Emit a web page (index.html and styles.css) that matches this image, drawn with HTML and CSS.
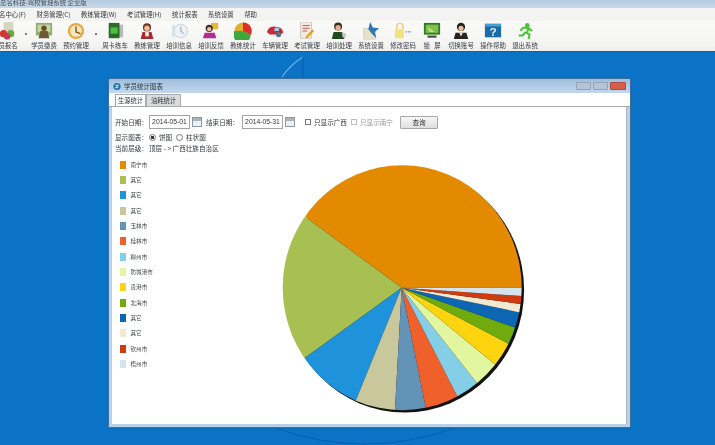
FILE: index.html
```html
<!DOCTYPE html>
<html lang="zh-CN">
<head>
<meta charset="utf-8">
<title>学员统计图表</title>
<link rel="stylesheet" href="styles.css">
</head>
<body>
<div class="app">
  <header class="titlebar"><span>总名科技-驾校管理系统 企业版</span></header>
  <nav class="menubar">
    <span class="m1">名中心(F)</span><span>财务管理(C)</span><span>教练管理(W)</span><span>考试管理(H)</span><span>统计报表</span><span>系统设置</span><span>帮助</span>
  </nav>
  <div class="toolbar">
    <div class="tool"><svg viewBox="0 0 20 20"><rect x="5" y="0" width="11" height="13" fill="#d8d4c4"/><circle cx="5" cy="13" r="4" fill="#d9342c"/><circle cx="13" cy="13" r="4" fill="#6aa83c"/><circle cx="9" cy="16" r="3.5" fill="#c23a58"/></svg><span>员报名</span></div>
    <i class="dot dot-a"></i>
    <div class="tool"><svg viewBox="0 0 20 20"><rect x="1" y="1" width="18" height="14" fill="#8fb070"/><rect x="3" y="3" width="14" height="8" fill="#c6d6a0"/><circle cx="10" cy="7" r="3" fill="#6b4a22"/><path d="M4 18 L6 10 H14 L16 18Z" fill="#6e5a30"/></svg><span>学员缴费</span></div>
    <div class="tool"><svg viewBox="0 0 20 20"><circle cx="10" cy="10" r="9" fill="#e8a93c"/><circle cx="10" cy="10" r="6.5" fill="#f6e6c4"/><path d="M10 5V11L15 13" stroke="#8a5a20" stroke-width="1.6" fill="none"/></svg><span>预约管理</span></div>
    <i class="dot dot-b"></i>
    <div class="tool"><svg viewBox="0 0 20 20"><rect x="11" y="3" width="8" height="14" fill="#b8bcb4"/><rect x="3" y="1" width="12" height="17" fill="#2c6a2c"/><rect x="5" y="6" width="8" height="7" fill="#48c040"/></svg><span>周卡练车</span></div>
    <div class="tool"><svg viewBox="0 0 20 20"><circle cx="10" cy="6" r="4.5" fill="#6e3420"/><circle cx="10" cy="7" r="3" fill="#eebc9c"/><path d="M3 19 L5 11 H15 L17 19Z" fill="#a8282c"/><rect x="8" y="11" width="4" height="5" fill="#f0e8e0"/></svg><span>教练管理</span></div>
    <div class="tool"><svg viewBox="0 0 20 20"><rect x="2" y="3" width="4" height="14" fill="#dfe6ea"/><circle cx="12" cy="10" r="7.5" fill="#eef2f4" stroke="#c4d0d8"/><path d="M12 5V10L15 13" stroke="#a8b8c4" stroke-width="1.4" fill="none"/></svg><span>培训信息</span></div>
    <div class="tool"><svg viewBox="0 0 20 20"><rect x="10" y="1" width="8" height="7" fill="#e8b830"/><circle cx="8" cy="7" r="4" fill="#3a2c30"/><circle cx="8" cy="8" r="2.4" fill="#ecc0a4"/><path d="M1 18 L3 12 H14 L16 18Z" fill="#b02c90"/></svg><span>培训反馈</span></div>
    <div class="tool"><svg viewBox="-10 -10 20 20"><circle r="9.5" fill="#dfae2c"/><path d="M0 0 L0 -9.5 A9.5 9.5 0 0 1 8.5 4.5Z" fill="#e02c2c"/><path d="M0 0 L8.5 4.5 A9.5 9.5 0 1 1 -9.5 0Z" fill="#3ea83a"/></svg><span>教练统计</span></div>
    <div class="tool"><svg viewBox="0 0 20 20"><path d="M1 11 Q3 5 9 5 L15 6 Q19 8 19 12 L16 14 H4Z" fill="#c8283c"/><path d="M10 6 L15 7 L14 10 H9Z" fill="#9cd0e8"/><circle cx="14" cy="14" r="3" fill="#5a7488"/></svg><span>车辆管理</span></div>
    <div class="tool"><svg viewBox="0 0 20 20"><rect x="3" y="0" width="12" height="18" fill="#f2ece4" stroke="#b8b0a8" stroke-width=".7"/><path d="M5 4H13M5 7H13M5 10H10" stroke="#c04a3c"/><path d="M8 17 L16 8 L18 10 L10 18Z" fill="#e0a020"/></svg><span>考试管理</span></div>
    <div class="tool"><svg viewBox="0 0 20 20"><circle cx="9" cy="5" r="4.4" fill="#3a2a18"/><circle cx="9" cy="6.4" r="3" fill="#e6b08c"/><path d="M2 19 L4 11 H14 L16 19Z" fill="#20491f"/><path d="M13 11 L18 13 L17 18 L14 17Z" fill="#c4c8c0"/></svg><span>培训处理</span></div>
    <div class="tool"><svg viewBox="0 0 20 20"><rect x="2" y="7" width="13" height="12" fill="#e8e2c8" stroke="#b0c0cc" stroke-width=".6"/><path d="M9 0 L12 6 L19 7 L14 11 L16 18 L11 13 L7 8Z" fill="#2878b8"/></svg><span>系统设置</span></div>
    <div class="tool"><svg viewBox="0 0 20 20"><path d="M3 8V5a3.5 3.5 0 0 1 7 0V8" fill="none" stroke="#ecd070" stroke-width="1.6"/><rect x="1" y="8" width="10" height="10" rx="1" fill="#f4e27c"/><path d="M13 11H19" stroke="#7088b8" stroke-width="1.5" stroke-dasharray="1.5 1"/></svg><span>修改密码</span></div>
    <div class="tool tool-narrow"><svg viewBox="0 0 20 20"><rect x="1" y="1" width="18" height="13" fill="#2f7a26"/><path d="M3 3H17V12H3Z" fill="#7fc048"/><path d="M5 5L13 11H7Z" fill="#bce080"/><rect x="5" y="15" width="10" height="2.5" fill="#50504a"/></svg><span>锁&nbsp;&nbsp;&nbsp;屏</span></div>
    <div class="tool"><svg viewBox="0 0 20 20"><circle cx="10" cy="5.5" r="4.6" fill="#2a2018"/><circle cx="10" cy="7" r="2.9" fill="#e8c0a0"/><path d="M2 19 L4 12 H16 L18 19Z" fill="#2a241e"/><path d="M8 12 L10 16 L12 12Z" fill="#f0e8e0"/></svg><span>切换账号</span></div>
    <div class="tool"><svg viewBox="0 0 20 20"><rect x="1" y="2" width="18" height="15" fill="#1d6ba6"/><rect x="1" y="2" width="18" height="3" fill="#45a0d0"/><text x="10" y="15" class="help-mark">?</text></svg><span>操作帮助</span></div>
    <div class="tool"><svg viewBox="0 0 20 20"><circle cx="12.5" cy="3.5" r="2.5" fill="#4cc038"/><path d="M8 6 L14 7 L12 12 L15 14 L14 19 M11 11 L7 15 L3 15 M8 6 L5 10 M14 7 L18 10" stroke="#4cc038" stroke-width="2.3" fill="none"/></svg><span>退出系统</span></div>
  </div>
  <main class="desktop">
    <svg class="wallpaper" viewBox="0 0 715 393"><path class="arc-light" d="M282 25 Q290 13 303 5"/><path class="arc-dark" d="M303 5V26"/><path class="arc-dark" d="M275 376 Q365 408 455 376"/></svg>
    <section class="window">
      <div class="win-title">
        <svg class="win-logo" viewBox="0 0 10 10"><circle cx="5" cy="5" r="4.5" fill="#1c6ea8"/><path d="M3 3.5 H7 L3 6.5 H7" stroke="#fff" fill="none"/></svg>
        <span class="win-name">学员统计图表</span>
        <div class="win-controls"><b class="ctl"></b><b class="ctl"></b><b class="ctl ctl-close"></b></div>
      </div>
      <div class="tabs"><span class="tab tab-on">生源统计</span><span class="tab">油耗统计</span></div>
      <div class="panel">
        <div class="form-row row-one">
          <label class="lbl-date">开始日期：</label><span class="input">2014-05-01</span><span class="cal"></span>
          <label class="lbl-date lbl-end">结束日期：</label><span class="input">2014-05-31</span><span class="cal"></span>
          <span class="check check-first"></span><span class="chk-label">只显示广西</span>
          <span class="check check-second"></span><span class="chk-label muted">只显示南宁</span>
          <button class="query">查询</button>
        </div>
        <div class="form-row row-two">
          <label class="lbl-show">显示图表：</label><span class="radio radio-on"></span><span class="opt">饼图</span><span class="radio radio-off"></span><span>柱状图</span>
        </div>
        <div class="form-row row-three"><label class="lbl-show">当前层级：</label><span>顶层 - &gt; 广西壮族自治区</span></div>
        <div class="chart-row">
          <ul class="legend">
            <li><i class="c1"></i>南宁市</li><li><i class="c2"></i>其它</li><li><i class="c3"></i>其它</li><li><i class="c4"></i>其它</li><li><i class="c5"></i>玉林市</li><li><i class="c6"></i>桂林市</li><li><i class="c7"></i>柳州市</li><li><i class="c8"></i>防城港市</li><li><i class="c9"></i>贵港市</li><li><i class="c10"></i>北海市</li><li><i class="c11"></i>其它</li><li><i class="c12"></i>其它</li><li><i class="c13"></i>钦州市</li><li><i class="c14"></i>梧州市</li>
          </ul>
          <svg class="pie" viewBox="275 160 256 258">
            <defs><clipPath id="pie-clip"><ellipse cx="402.2" cy="287.7" rx="119.5" ry="122.5"/></clipPath></defs>
            <ellipse class="pie-shadow" cx="404.6" cy="290" rx="119.5" ry="122.5"/>
            <g clip-path="url(#pie-clip)">
              <polygon class="c1" points="401.7,287.7 557.7,287.7 557.7,120 276.9,120 276.9,196.2"/>
              <polygon class="c2" points="401.7,287.7 276.9,196.2 276.9,378.2"/>
              <polygon class="c3" points="401.7,287.7 276.9,378.2 342.3,433.7"/>
              <polygon class="c4" points="401.7,287.7 342.3,433.7 393,445.8"/>
              <polygon class="c5" points="401.7,287.7 393,445.8 432.9,443.2"/>
              <polygon class="c6" points="401.7,287.7 432.9,443.2 473.2,427.2"/>
              <polygon class="c7" points="401.7,287.7 473.2,427.2 499.2,411.2"/>
              <polygon class="c8" points="401.7,287.7 499.2,411.2 523,387.3"/>
              <polygon class="c9" points="401.7,287.7 523,387.3 539.5,360"/>
              <polygon class="c10" points="401.7,287.7 539.5,360 549.9,339.7"/>
              <polygon class="c11" points="401.7,287.7 549.9,339.7 554.6,319.7"/>
              <polygon class="c12" points="401.7,287.7 554.6,319.7 556.7,308.9"/>
              <polygon class="c13" points="401.7,287.7 556.7,308.9 557.7,298.5"/>
              <polygon class="c14" points="401.7,287.7 557.7,298.5 557.7,287.7"/>
            </g>
          </svg>
        </div>
      </div>
    </section>
  </main>
</div>
</body>
</html>
```

FILE: styles.css
```css
* { box-sizing: border-box; }
html, body { margin: 0; padding: 0; }
body { width: 715px; height: 445px; overflow: hidden; font-family: "Noto Sans CJK SC", "Liberation Sans", sans-serif; font-size: 7px; color: #2f3439; background: #0a73c6; }
.app { height: 445px; display: flex; flex-direction: column; overflow: hidden; }
.titlebar { height: 8px; background: linear-gradient(#b4cbe2, #c8d9ea); font-size: 6.4px; line-height: 6px; overflow: hidden; white-space: nowrap; color: #4a4e53; filter: blur(.35px); }
.menubar { height: 13px; background: #f3f3f1; display: flex; align-items: center; white-space: nowrap; font-size: 6.4px; line-height: 13px; gap: 10.5px; filter: blur(.3px); color: #33373c; }
.m1 { margin-left: -1px; }
.toolbar { height: 31px; flex: none; display: flex; background: linear-gradient(#fafaf9, #f4f4f2 80%, #ecedeb); border-bottom: 1px solid #3b5870; overflow: hidden; }
.tool { flex: none; width: 32px; display: flex; flex-direction: column; align-items: center; padding-top: 1px; font-size: 6.4px; line-height: 9px; white-space: nowrap; color: #353a40; }
.tool:first-child { margin-left: -8px; }
.tool span { filter: blur(.3px); margin-top: 1px; }
.tool svg { width: 18px; height: 18px; filter: blur(.35px); }
.tool-narrow { width: 26px; }
.help-mark { font-family: "Liberation Sans", sans-serif; font-size: 13px; font-weight: 700; fill: #dfeff8; text-anchor: middle; }
.dot { flex: none; align-self: flex-start; width: 2px; height: 2px; margin-top: 12px; background: #555; border-radius: 50%; }
.dot-a { margin-left: 1px; margin-right: 1px; }
.dot-b { margin-left: 3px; margin-right: 2px; }
.desktop { flex: 1; position: relative; padding: 26px 0 0 108px; background: #0a73c6; }
.wallpaper { position: absolute; left: 0; top: 0; width: 715px; height: 393px; fill: none; }
.arc-light { stroke: #6fb0e4; stroke-width: 1.2; }
.arc-dark { stroke: #0a5ea9; stroke-width: 1; }
.window { position: relative; width: 523px; height: 350px; border: 1px solid #3d6f9f; border-radius: 3px 3px 0 0; padding: 0 3px 3px; background: #b9d1e7; display: flex; flex-direction: column; box-shadow: 0 0 1px #0b4f8a; }
.win-title { height: 14px; flex: none; margin: 0 -3px; padding: 0 4px; display: flex; align-items: center; background: linear-gradient(#9fbedb, #c3d8ec); font-size: 6.5px; filter: blur(.25px); }
.win-logo { width: 8px; height: 9px; margin-right: 3px; }
.win-name { color: #2d3640; }
.win-controls { margin-left: auto; display: flex; gap: 2px; }
.ctl { width: 15px; height: 8px; background: #b5c5d6; border: 1px solid #8ea4ba; border-radius: 1px; }
.ctl-close { width: 16px; background: #d6604c; border-color: #b04a3a; }
.tabs { height: 14px; flex: none; display: flex; background: #fff; margin: 0 -3px; padding: 2px 0 0 6px; border-bottom: 1px solid #a7a9ab; align-items: flex-end; filter: blur(.25px); }
.tab { height: 12px; width: 35px; text-align: center; font-size: 6.3px; line-height: 12px; background: #dcdcdc; border: 1px solid #aaa; border-bottom: 0; }
.tab-on { width: 31px; background: #fff; }
.panel { flex: 1; background: #fff; border-right: 1px solid #a9b5c0; padding-top: 7px; display: flex; flex-direction: column; min-height: 0; }
.form-row { display: flex; align-items: center; padding-left: 3px; white-space: nowrap; font-size: 6.6px; color: #33383e; }
.form-row > label, .form-row > span:not(.check):not(.radio):not(.cal), .query { filter: blur(.25px); }
.row-one { height: 15px; }
.lbl-date { width: 34px; }
.lbl-end { width: 36px; margin-left: 4px; }
.input { width: 41px; height: 14px; border: 1px solid #a4a4a4; text-align: center; line-height: 12px; font-family: "Liberation Sans", sans-serif; font-size: 6.8px; }
.cal { width: 10px; height: 10px; margin-left: 2px; border: 1px solid #8f979f; background: linear-gradient(#aab4bc 3px, #eef1f3 3px); }
.check { width: 6px; height: 6px; border: 1px solid #777; background: #fff; margin-right: 3px; }
.check-first { margin-left: 10px; }
.check-second { margin-left: 6px; border-color: #bbb; }
.chk-label { width: 31px; }
.muted { color: #9a9a9a; }
.query { width: 38px; height: 13px; margin: 1px 0 0 9px; padding: 0; font: inherit; color: #333; background: linear-gradient(#f6f6f6, #dfdfdf); border: 1px solid #a8a8a8; border-radius: 1px; }
.row-two { height: 12px; margin-top: 2px; }
.row-three { height: 11px; margin-top: -1px; }
.lbl-show { width: 34px; }
.radio { width: 7px; height: 7px; border: 1px solid #777; border-radius: 50%; background: #fff; margin-right: 3px; }
.radio-on { background: radial-gradient(#333 0 1.4px, #fff 1.8px); }
.radio-off { margin-left: 3px; }
.opt { width: 14px; }
.chart-row { flex: 1; display: flex; min-height: 0; margin-top: 4px; }
.legend { list-style: none; margin: 0; padding: 0 0 0 8px; width: 163px; flex: none; font-size: 5.6px; color: #40454b; }
.legend li { height: 15.33px; display: flex; align-items: center; filter: blur(.25px); }
.legend i { width: 5.5px; height: 8px; margin-right: 5px; }
.pie { width: 256px; height: 258px; flex: none; margin-top: 3px; }
.pie-shadow { fill: #111; filter: blur(.6px); }
.c1 { background: #e48a00; fill: #e48a00; }
.c2 { background: #a8bf52; fill: #a8bf52; }
.c3 { background: #1e93dc; fill: #1e93dc; }
.c4 { background: #c9c79c; fill: #c9c79c; }
.c5 { background: #6493b8; fill: #6493b8; }
.c6 { background: #f0602a; fill: #f0602a; }
.c7 { background: #85cfe6; fill: #85cfe6; }
.c8 { background: #e2f59f; fill: #e2f59f; }
.c9 { background: #fed40f; fill: #fed40f; }
.c10 { background: #70ab0d; fill: #70ab0d; }
.c11 { background: #0c66b3; fill: #0c66b3; }
.c12 { background: #f1ead0; fill: #f1ead0; }
.c13 { background: #cf3a0e; fill: #cf3a0e; }
.c14 { background: #d5e3ee; fill: #d5e3ee; }
```
